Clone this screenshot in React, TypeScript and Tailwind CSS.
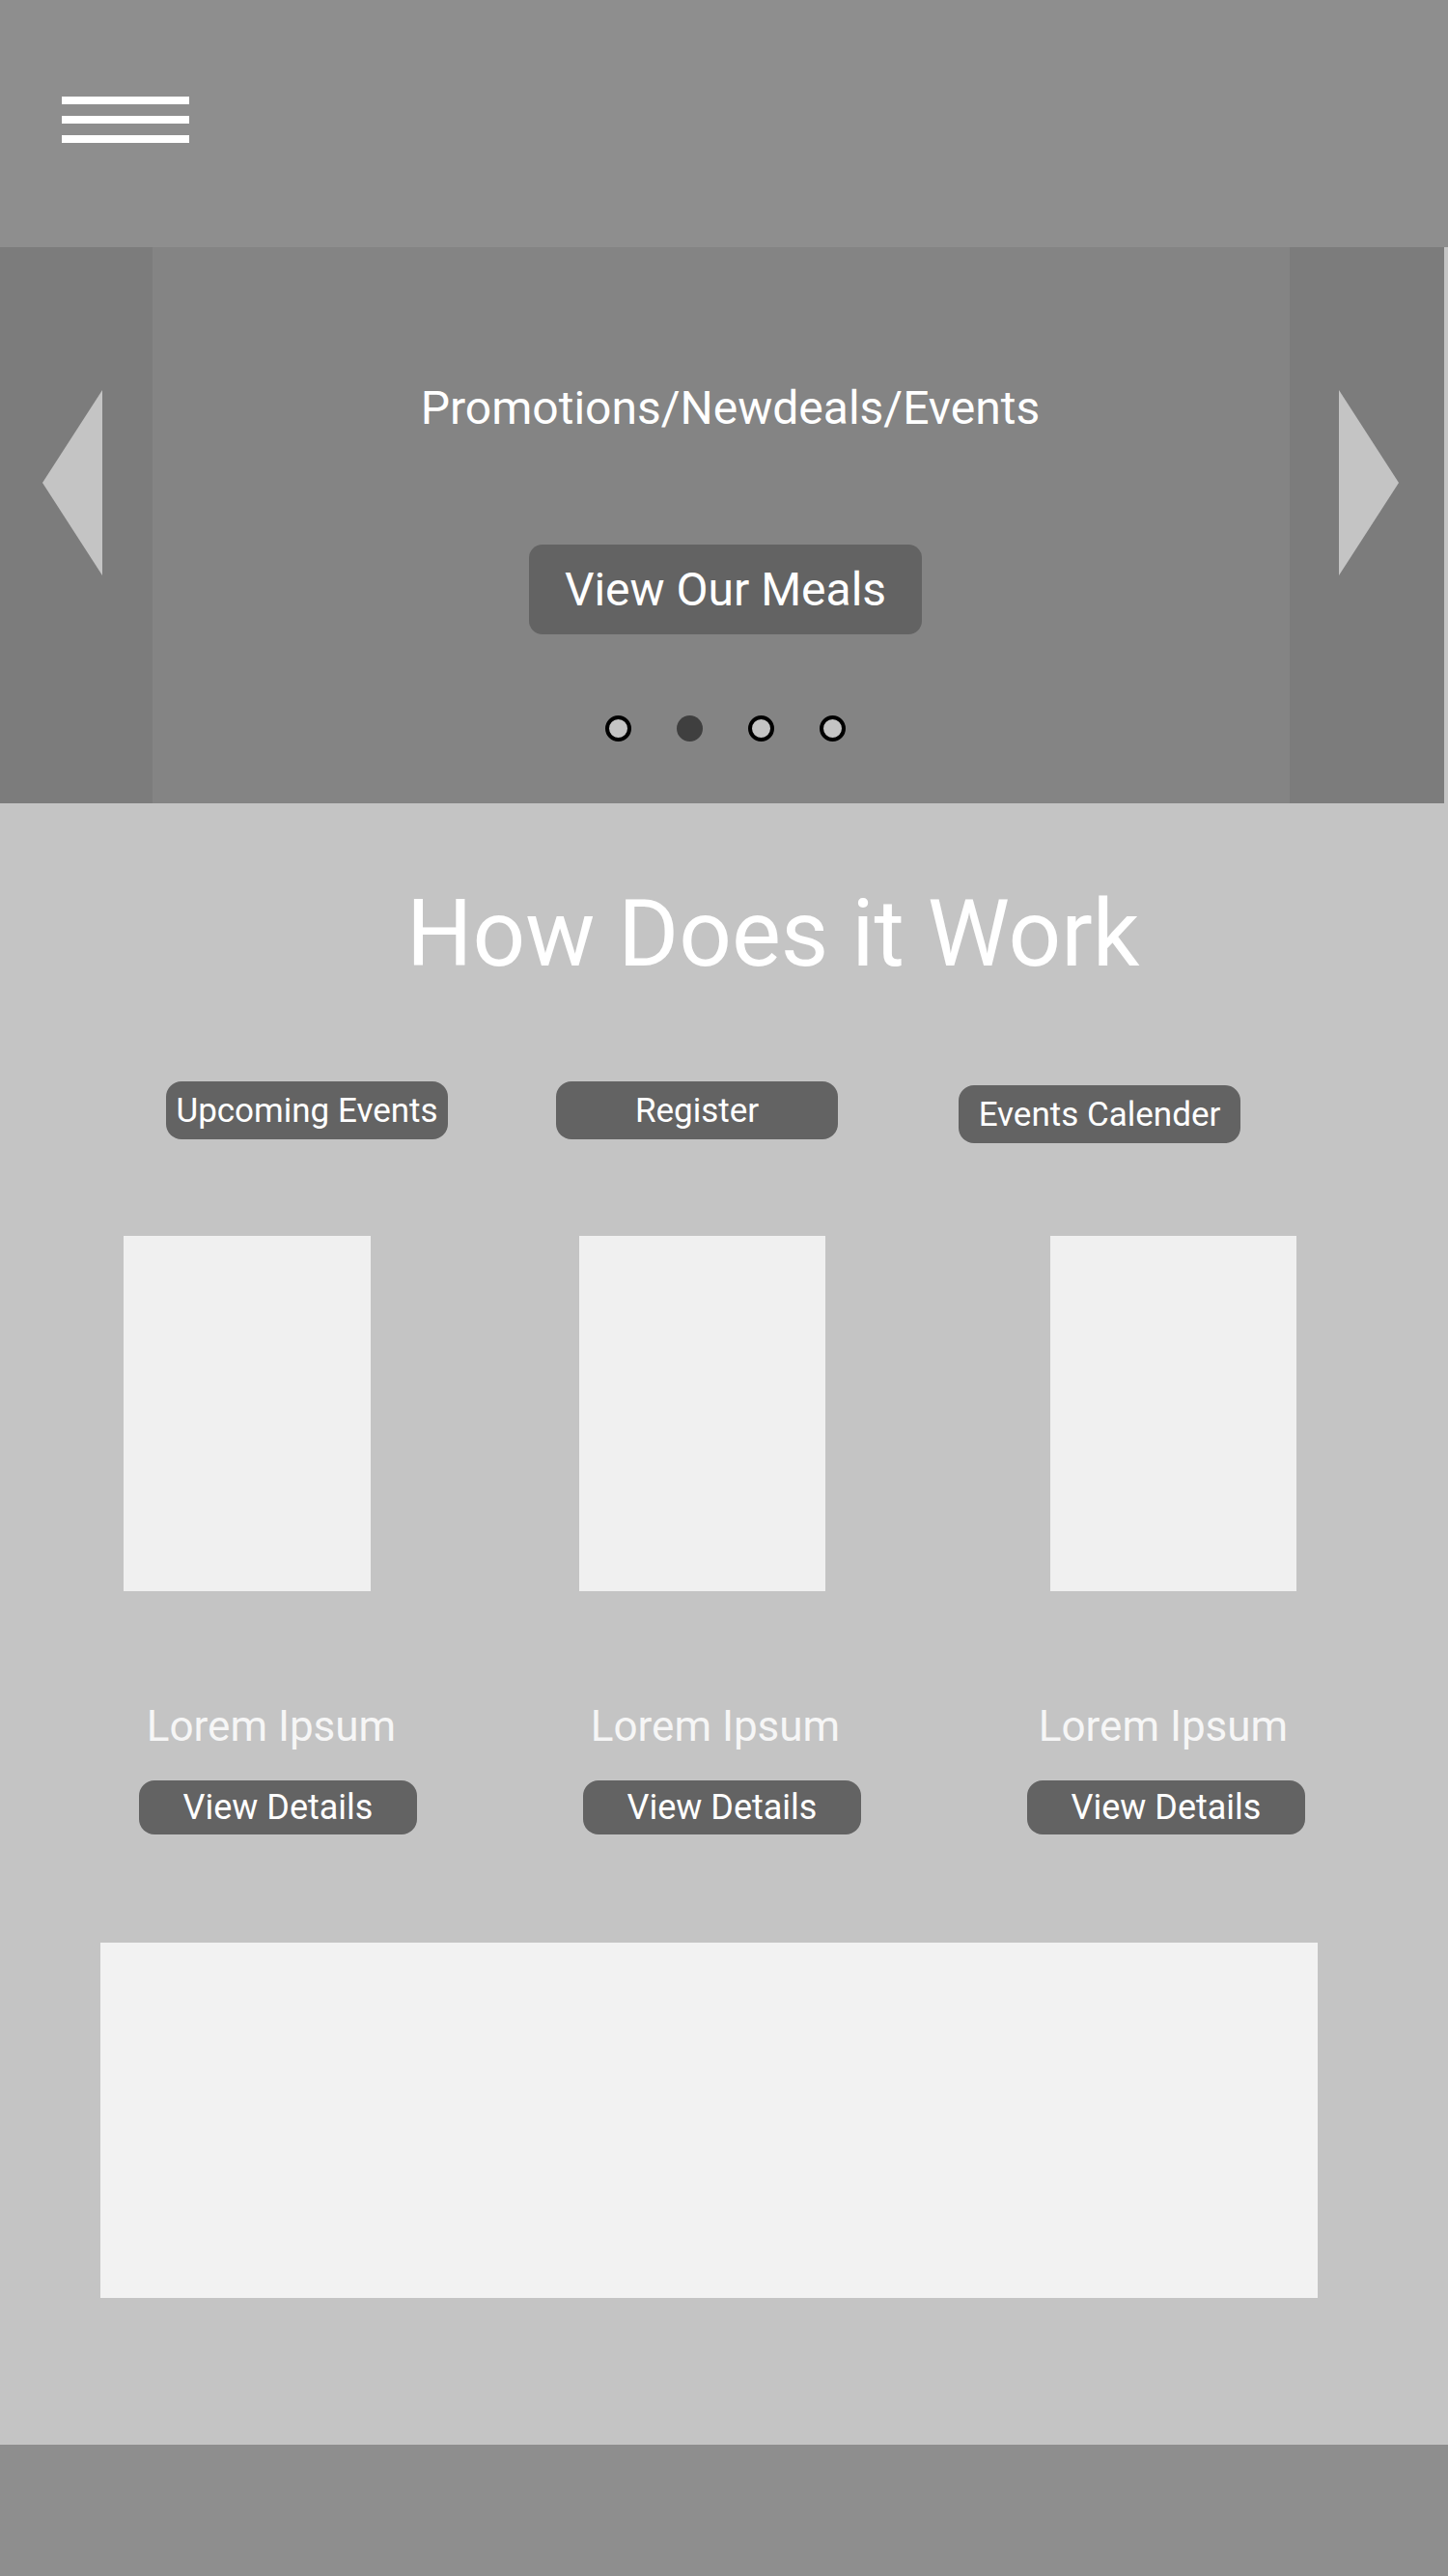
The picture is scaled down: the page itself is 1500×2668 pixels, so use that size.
import React, { useState } from 'react';

const font = { fontFamily: 'Roboto, "Liberation Sans", sans-serif' };

function Header() {
  return (
    <header className="h-[256px] w-full bg-[#8e8e8e] pl-[64px] pt-[100px]">
      <button className="flex flex-col gap-[12px]" aria-label="Menu">
        <span className="block h-[8px] w-[132px] bg-white" />
        <span className="block h-[8px] w-[132px] bg-white" />
        <span className="block h-[8px] w-[132px] bg-white" />
      </button>
    </header>
  );
}

function Arrow({ dir }: { dir: 'left' | 'right' }) {
  return (
    <svg width="62" height="192" viewBox="0 0 62 192">
      {dir === 'left' ? (
        <polygon points="62,0 62,192 0,96" fill="#c4c4c4" />
      ) : (
        <polygon points="0,0 0,192 62,96" fill="#c4c4c4" />
      )}
    </svg>
  );
}

function Carousel() {
  const [active, setActive] = useState(1);

  return (
    <section className="flex h-[576px] w-[1496px]">
      {/* Prev */}
      <div className="w-[158px] shrink-0 bg-[#7c7c7c] pl-[44px] pt-[148px]">
        <button onClick={() => setActive((active + 3) % 4)} aria-label="Previous">
          <Arrow dir="left" />
        </button>
      </div>

      {/* Slide */}
      <div className="flex flex-1 flex-col items-center bg-[#848484] pl-[9px] pt-[143px]">
        <h2 className="ml-[10px] text-[48px] leading-[48px] text-white">
          Promotions/Newdeals/Events
        </h2>
        <button className="mt-[117px] flex h-[93px] w-[407px] items-center justify-center rounded-[14px] bg-[#636363] text-[48px] leading-none text-white">
          View Our Meals
        </button>
        <div className="mt-[84px] flex gap-[47px]">
          {[0, 1, 2, 3].map(i => (
            <button
              key={i}
              onClick={() => setActive(i)}
              aria-label={`Slide ${i + 1}`}
              className={
                i === active
                  ? 'h-[27px] w-[27px] rounded-full bg-[#3f3f3f]'
                  : 'h-[27px] w-[27px] rounded-full border-[4px] border-black bg-[#c4c4c4]'
              }
            />
          ))}
        </div>
      </div>

      {/* Next */}
      <div className="w-[160px] shrink-0 bg-[#7c7c7c] pl-[51px] pt-[148px]">
        <button onClick={() => setActive((active + 1) % 4)} aria-label="Next">
          <Arrow dir="right" />
        </button>
      </div>
    </section>
  );
}

function Pill({ label, className = '' }: { label: string; className?: string }) {
  return (
    <button
      className={`flex h-[60px] w-[292px] items-center justify-center whitespace-nowrap rounded-[16px] bg-[#636363] text-[35px] leading-none text-white ${className}`}
    >
      {label}
    </button>
  );
}

function HowItWorks() {
  return (
    <section className="flex flex-col pt-[87px] pb-[152px]">
      <h1 className="ml-[421px] h-[96px] text-[96px] leading-[96px] text-white">
        How Does it Work
      </h1>

      {/* Tabs */}
      <div className="mt-[105px] flex items-start">
        <Pill label="Upcoming Events" className="ml-[172px]" />
        <Pill label="Register" className="ml-[112px]" />
        <Pill label="Events Calender" className="ml-[125px] mt-[4px]" />
      </div>

      {/* Cards */}
      <div className="mt-[96px] flex">
        <div className="ml-[128px] h-[368px] w-[256px] bg-[#f0f0f0]" />
        <div className="ml-[216px] h-[368px] w-[255px] bg-[#f0f0f0]" />
        <div className="ml-[233px] h-[368px] w-[255px] bg-[#f0f0f0]" />
      </div>

      <div className="mt-[118px] flex">
        <p className="ml-[131px] w-[300px] whitespace-nowrap text-center text-[44px] leading-[44px] text-[#f6f6f6]">Lorem Ipsum</p>
        <p className="ml-[160px] w-[300px] whitespace-nowrap text-center text-[44px] leading-[44px] text-[#f6f6f6]">Lorem Ipsum</p>
        <p className="ml-[164px] w-[300px] whitespace-nowrap text-center text-[44px] leading-[44px] text-[#f6f6f6]">Lorem Ipsum</p>
      </div>

      <div className="mt-[34px] flex">
        {['ml-[144px]', 'ml-[172px]', 'ml-[172px]'].map((m, i) => (
          <button
            key={i}
            className={`${m} flex h-[56px] w-[288px] items-center justify-center rounded-[16px] bg-[#636363] text-[36px] leading-none text-white`}
          >
            View Details
          </button>
        ))}
      </div>

      {/* Banner placeholder */}
      <div className="ml-[104px] mt-[112px] h-[368px] w-[1261px] bg-[#f2f2f2]" />
    </section>
  );
}

export default function App() {
  return (
    <div className="min-h-screen w-[1500px] bg-[#c4c4c4]" style={font}>
      <Header />
      <Carousel />
      <HowItWorks />
      <footer className="h-[136px] w-full bg-[#8e8e8e]" />
    </div>
  );
}
